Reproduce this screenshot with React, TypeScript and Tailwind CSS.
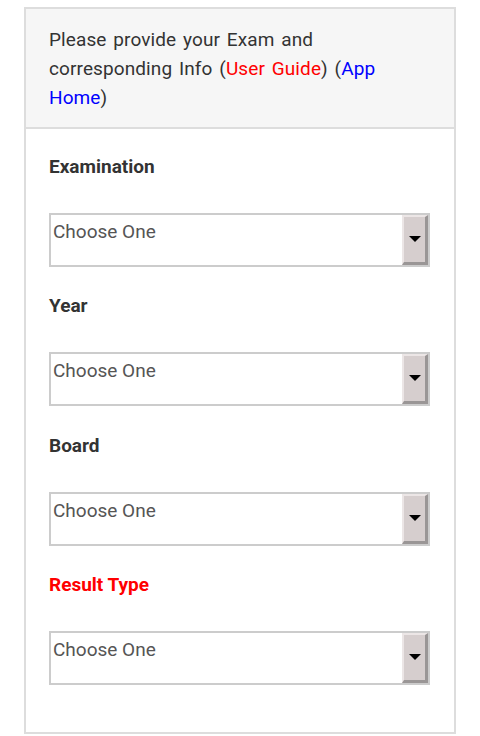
import React from "react";

function SelectBox() {
  return (
    <div className="flex h-[54px] w-[381px] border-2 border-[#cccccc] bg-white">
      <div className="flex-1 pl-[2px] pt-[5px] text-[19px] leading-[24px] text-[#555555]">Choose One</div>
      <div className="flex h-full w-[26px] items-center justify-center border-l-2 border-t-2 border-r-[3px] border-b-[3px] border-l-[#ece6e6] border-t-[#ece6e6] border-r-[#9a9696] border-b-[#9a9696] bg-[#d6cece]">
        <svg width="12" height="7" viewBox="0 0 12 7">
          <polygon points="0,0 12,0 6,6" fill="#000" />
        </svg>
      </div>
    </div>
  );
}

function Field({ label, red, gap }: { label: string; red?: boolean; gap: string }) {
  return (
    <div className={`flex flex-col ${gap}`}>
      <div className={`h-[24px] text-[19px] font-bold leading-[24px] ${red ? "text-[#ff0000]" : "text-[#333333]"}`}>{label}</div>
      <div className="mt-[34px]">
        <SelectBox />
      </div>
    </div>
  );
}

export default function App() {
  return (
    <div className="min-h-[736px] bg-white pt-[7px] pl-[24px]" style={{ fontFamily: "Roboto, 'Liberation Sans', sans-serif" }}>
      <div className="w-[432px] h-[727px] border-2 border-[#dddddd]">
        <div className="bg-[#f6f6f6] border-b-2 border-[#dddddd] pl-[23px] pt-[16px] pb-[15px]">
          <div className="w-[360px] text-[19px] leading-[29px] text-[#333333] tracking-[0.1px] [word-spacing:2px]">
            Please provide your Exam and corresponding Info (<span className="text-[#ff0000]">User Guide</span>) (<span className="text-[#0000ff]">App Home</span>)
          </div>
        </div>
        <div className="flex flex-col pl-[23px] pt-[26px]">
          <Field label="Examination" gap="" />
          <Field label="Year" gap="mt-[27px]" />
          <Field label="Board" gap="mt-[28px]" />
          <Field label="Result Type" red gap="mt-[27px]" />
        </div>
      </div>
    </div>
  );
}
